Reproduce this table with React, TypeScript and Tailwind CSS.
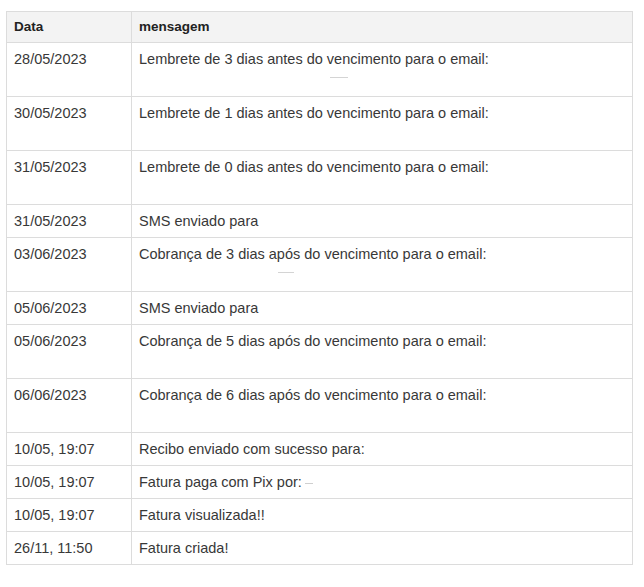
import React from "react";

type Entry = {
  date: string;
  message: string;
  tall?: boolean;
  // traço apagado (dado ocultado) na segunda linha
  mark?: { left: number; width: number };
  inlineMark?: boolean;
};

const entries: Entry[] = [
  { date: "28/05/2023", message: "Lembrete de 3 dias antes do vencimento para o email:", tall: true, mark: { left: 198, width: 18 } },
  { date: "30/05/2023", message: "Lembrete de 1 dias antes do vencimento para o email:", tall: true },
  { date: "31/05/2023", message: "Lembrete de 0 dias antes do vencimento para o email:", tall: true },
  { date: "31/05/2023", message: "SMS enviado para" },
  { date: "03/06/2023", message: "Cobrança de 3 dias após do vencimento para o email:", tall: true, mark: { left: 146, width: 16 } },
  { date: "05/06/2023", message: "SMS enviado para" },
  { date: "05/06/2023", message: "Cobrança de 5 dias após do vencimento para o email:", tall: true },
  { date: "06/06/2023", message: "Cobrança de 6 dias após do vencimento para o email:", tall: true },
  { date: "10/05, 19:07", message: "Recibo enviado com sucesso para:" },
  { date: "10/05, 19:07", message: "Fatura paga com Pix por:", inlineMark: true },
  { date: "10/05, 19:07", message: "Fatura visualizada!!" },
  { date: "26/11, 11:50", message: "Fatura criada!" },
];

export default function App() {
  return (
    <div
      className="w-[644px] h-[587px] bg-white pt-[11px] pl-[6px]"
      style={{ fontFamily: '"Liberation Sans", Arial, sans-serif' }}
    >
      <table className="w-[627px] border-collapse table-fixed text-[#383838]">
        <colgroup>
          <col className="w-[125px]" />
          <col />
        </colgroup>
        <thead>
          <tr className="h-[31px] bg-[#f3f3f3]">
            <th className="border border-[#dcdcdc] px-[7px] text-left align-middle text-[13.5px] font-bold text-[#222]">
              Data
            </th>
            <th className="border border-[#dcdcdc] px-[7px] text-left align-middle text-[13.5px] font-bold text-[#222]">
              mensagem
            </th>
          </tr>
        </thead>
        <tbody>
          {entries.map((e, i) => (
            <tr key={i} className={e.tall ? "h-[54px]" : "h-[33px]"}>
              <td className="border border-[#dcdcdc] px-[7px] pt-[6px] align-top text-[14.5px] leading-[20px]">
                {e.date}
              </td>
              <td className="relative border border-[#dcdcdc] px-[7px] pt-[6px] align-top text-[14.5px] leading-[20px]">
                {e.message}
                {e.inlineMark && (
                  <span className="ml-[3px] inline-block h-px w-[8px] align-middle bg-[#cfcfcf]" />
                )}
                {e.mark && (
                  <span
                    className="absolute top-[34px] h-px bg-[#d4d4d4]"
                    style={{ left: e.mark.left, width: e.mark.width }}
                  />
                )}
              </td>
            </tr>
          ))}
        </tbody>
      </table>
    </div>
  );
}
